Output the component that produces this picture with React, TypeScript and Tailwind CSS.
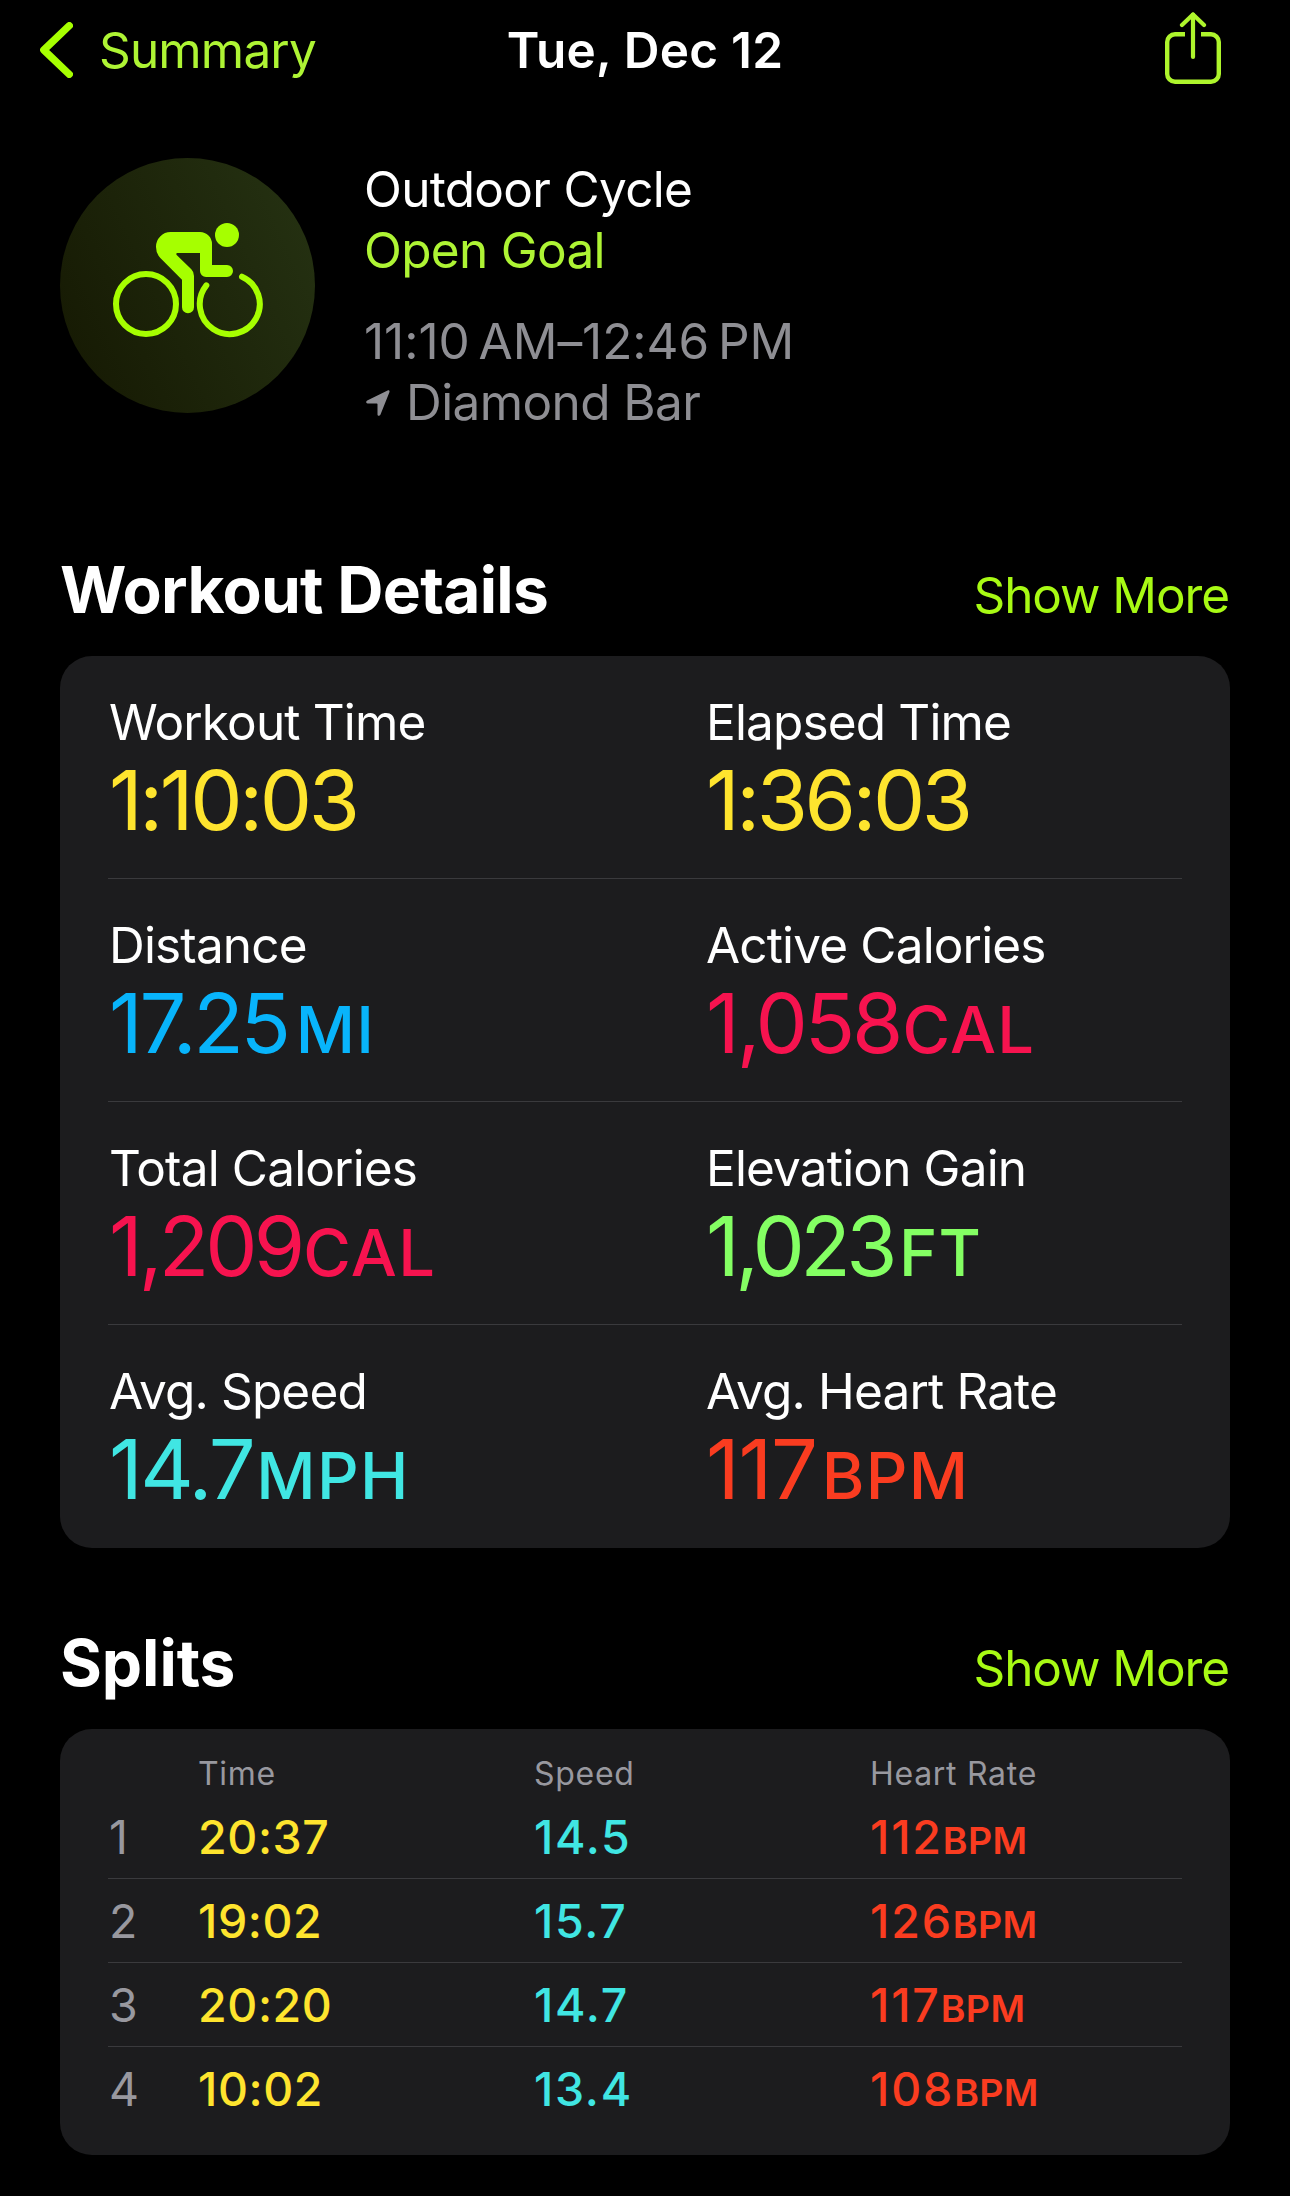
import type { ReactNode } from "react"

type Metric = {
  label: string
  value: string
  unit?: string
  color: string
  tracking: string
  unitGap?: string
}

type Split = {
  time: string
  speed: string
  heartRate: string
}

const metrics: Metric[] = [
  { label: "Workout Time", value: "1:10:03", color: "text-[#fee42e]", tracking: "tracking-[-0.041em]" },
  { label: "Elapsed Time", value: "1:36:03", color: "text-[#fee42e]", tracking: "tracking-[-0.042em]" },
  {
    label: "Distance",
    value: "17.25",
    unit: "MI",
    color: "text-[#08b4fb]",
    tracking: "tracking-[-0.04em]",
    unitGap: "ml-2",
  },
  {
    label: "Active Calories",
    value: "1,058",
    unit: "CAL",
    color: "text-[#f7134f]",
    tracking: "tracking-[-0.037em]",
    unitGap: "ml-0.5",
  },
  {
    label: "Total Calories",
    value: "1,209",
    unit: "CAL",
    color: "text-[#f7134f]",
    tracking: "tracking-[-0.048em]",
    unitGap: "ml-0.5",
  },
  {
    label: "Elevation Gain",
    value: "1,023",
    unit: "FT",
    color: "text-[#84ff63]",
    tracking: "tracking-[-0.055em]",
    unitGap: "ml-1.5",
  },
  {
    label: "Avg. Speed",
    value: "14.7",
    unit: "MPH",
    color: "text-[#40e6e3]",
    tracking: "tracking-[-0.03em]",
    unitGap: "ml-[3px]",
  },
  {
    label: "Avg. Heart Rate",
    value: "117",
    unit: "BPM",
    color: "text-[#fa3c20]",
    tracking: "tracking-[-0.015em]",
    unitGap: "ml-[5px]",
  },
]

const splits: Split[] = [
  { time: "20:37", speed: "14.5", heartRate: "112" },
  { time: "19:02", speed: "15.7", heartRate: "126" },
  { time: "20:20", speed: "14.7", heartRate: "117" },
  { time: "10:02", speed: "13.4", heartRate: "108" },
]

function BackIcon() {
  return (
    <svg viewBox="0 0 33 56" fill="none" className="h-14 w-[33px]" aria-hidden="true">
      <path d="M29.3 3.7 3.8 28l25.5 24.3" stroke="currentColor" strokeWidth="7.3" strokeLinecap="round" strokeLinejoin="round" />
    </svg>
  )
}

function ShareIcon() {
  return (
    <svg viewBox="0 0 56 72" fill="none" className="h-[72px] w-14" aria-hidden="true">
      <g stroke="currentColor" strokeWidth="4.2" strokeLinecap="round" strokeLinejoin="round">
        <path d="M28 2.5V45" />
        <path d="M17 13 28 2.5 39 13" />
      </g>
      <path
        d="M20 22.3H10a7.8 7.8 0 0 0-7.8 7.8v31.8A7.8 7.8 0 0 0 10 69.7h36a7.8 7.8 0 0 0 7.8-7.8V30.1a7.8 7.8 0 0 0-7.8-7.8H36"
        stroke="currentColor"
        strokeWidth="4.4"
      />
    </svg>
  )
}

function CyclistIcon() {
  return (
    <svg viewBox="30 24 765 765" fill="none" className="size-full" aria-hidden="true">
      <circle cx="288" cy="462" r="90" stroke="currentColor" strokeWidth="18" />
      <path d="M576 380A90 90 0 1 1 469 406" stroke="currentColor" strokeWidth="18" strokeLinecap="round" />
      <circle cx="531" cy="255" r="36" fill="currentColor" />
      <path
        d="M362 246H450A36 36 0 0 1 486 282V345H531A18 18 0 0 1 531 381H468A18 18 0 0 1 450 363V309H382Q377 310 380 315L424 358Q432 366 432 378V472A18 18 0 0 1 396 472V389L331 324Q318 310 318 291A44 44 0 0 1 362 246Z"
        fill="currentColor"
      />
    </svg>
  )
}

function LocationIcon() {
  return (
    <svg viewBox="0 0 24 26" fill="currentColor" className="h-[26px] w-6" aria-hidden="true">
      <path d="M21.6.4 1.2 10.6C-.4 11.5 0 13.4 1.6 13.4h9.2q.7 0 .7.8v10c0 2 2.1 2.2 2.9.5l9-22.4C23.9.8 23-.2 21.6.4Z" />
    </svg>
  )
}

function SectionHeader({ title, className }: { title: string; className: string }) {
  return (
    <div className="flex h-[107px] items-baseline justify-between pt-px pr-px">
      <h2 className={`text-[64px] leading-[80px] font-bold ${className}`}>{title}</h2>
      <button type="button" className="text-[49.5px] leading-[60px] tracking-[-0.022em] text-[#a8fa14]">
        Show More
      </button>
    </div>
  )
}

function Card({ children, className }: { children: ReactNode; className?: string }) {
  return <div className={`rounded-[32px] bg-[#1c1c1e] px-12 ${className ?? ""}`}>{children}</div>
}

function MetricCell({ metric }: { metric: Metric }) {
  return (
    <div className="pt-[35px] pl-px whitespace-nowrap">
      <div className="text-[49.5px] leading-[62px] tracking-[-0.017em]">{metric.label}</div>
      <div className={`mt-[5px] text-[83px] leading-[84px] ${metric.tracking} ${metric.color}`}>
        {metric.value}
        {metric.unit && (
          <span className={`text-[65px] leading-none font-medium tracking-[0.02em] ${metric.unitGap}`}>
            {metric.unit}
          </span>
        )}
      </div>
    </div>
  )
}

function SplitRow({ index, split }: { index: number; split: Split }) {
  return (
    <div className="grid h-[84px] grid-cols-[90px_336px_336px_1fr] items-center border-b border-[#3a3a3d] text-[46.5px] leading-[60px] font-medium last:border-transparent">
      <span className="pl-px font-normal text-[#98989f]">{index}</span>
      <span className="tracking-[0.013em] text-[#fee42e]">{split.time}</span>
      <span className="tracking-[0.037em] text-[#40e6e3]">{split.speed}</span>
      <span className="tracking-[0.04em] text-[#fa3c20]">
        {split.heartRate}
        <span className="text-[37.5px] leading-none font-semibold tracking-[0.01em]">BPM</span>
      </span>
    </div>
  )
}

export default function App() {
  const rows = [0, 2, 4, 6].map((start) => metrics.slice(start, start + 2))

  return (
    <main className="h-[2196px] w-[1290px] overflow-hidden bg-black font-['Inter',sans-serif] text-white">
      <header className="grid h-[100px] grid-cols-[1fr_auto_1fr] items-center px-10 text-[49.5px] leading-[60px]">
        <button type="button" className="flex items-center gap-[26px] text-[#a6ff00]">
          <BackIcon />
          <span className="tracking-[-0.017em] text-[#aef434]">Summary</span>
        </button>
        <h1 className="font-semibold tracking-[0.005em]">Tue, Dec 12</h1>
        <button type="button" className="mt-[-4px] mr-[29px] justify-self-end text-[#aef52c]">
          <ShareIcon />
        </button>
      </header>

      <div className="px-[60px]">
        <section className="mt-[58px] flex h-[274px] gap-12">
          <div className="size-[255px] shrink-0 rounded-full bg-[linear-gradient(65deg,#151802,#263313)] text-[#a6ff00]">
            <CyclistIcon />
          </div>
          <div className="pt-px pl-px text-[49.5px] leading-[61px] tracking-[-0.014em] whitespace-nowrap">
            <div>Outdoor Cycle</div>
            <div className="text-[#aef434]">Open Goal</div>
            <div className="mt-[30px] tracking-[-0.001em] text-[#8e8e93]">
              11:10{"\u2009"}AM–12:46{"\u2009"}PM
            </div>
            <div className="flex items-center gap-4 pl-0.5 text-[#8e8e93]">
              <LocationIcon />
              <span className="tracking-[-0.012em]">Diamond Bar</span>
            </div>
          </div>
        </section>

        <section className="mt-[117px]">
          <SectionHeader title="Workout Details" className="tracking-[-0.011em]" />
          <Card>
            {rows.map((row) => (
              <div
                key={row[0].label}
                className="grid h-[223px] grid-cols-[597px_1fr] border-b border-[#3a3a3d] last:border-transparent"
              >
                {row.map((metric) => (
                  <MetricCell key={metric.label} metric={metric} />
                ))}
              </div>
            ))}
          </Card>
        </section>

        <section className="mt-[74px]">
          <SectionHeader title="Splits" className="tracking-[-0.001em]" />
          <Card className="py-6">
            <div className="grid grid-cols-[90px_336px_336px_1fr] text-[32px] leading-[42px] tracking-[0.022em] text-[#98989f]">
              <span />
              <span>Time</span>
              <span>Speed</span>
              <span>Heart Rate</span>
            </div>
            {splits.map((split, i) => (
              <SplitRow key={split.time} index={i + 1} split={split} />
            ))}
          </Card>
        </section>
      </div>
    </main>
  )
}
